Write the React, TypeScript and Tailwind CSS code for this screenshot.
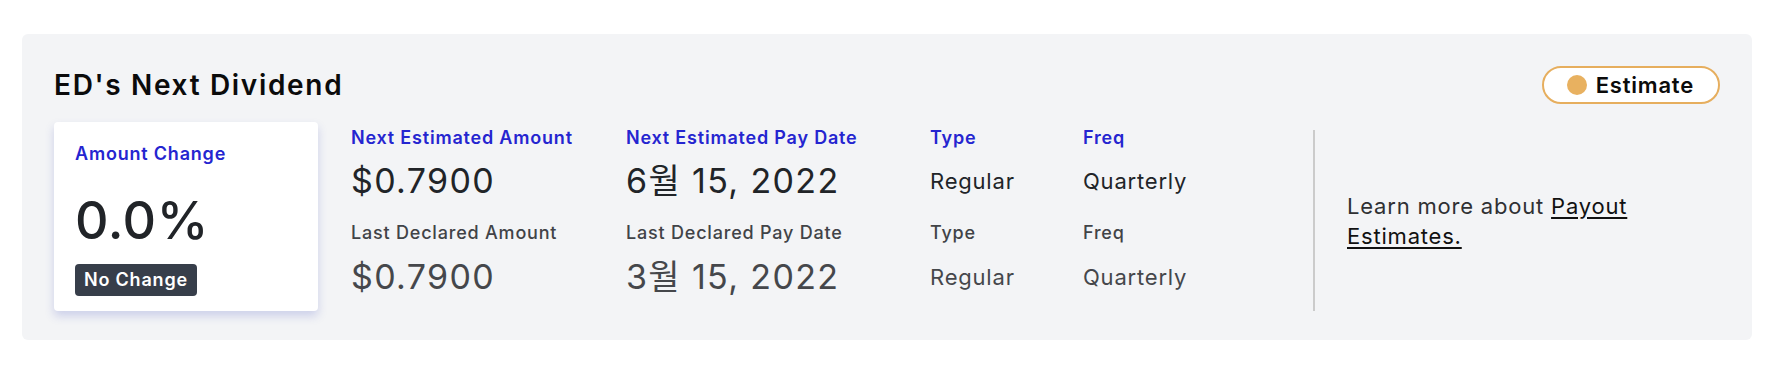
import React from "react";

const FONT = "font-['Inter','Noto_Sans_CJK_KR',sans-serif]";

const COLUMNS = [
  {
    id: "amount",
    width: "w-[275px]",
    next: { label: "Next Estimated Amount", value: "$0.7900" },
    last: { label: "Last Declared Amount", value: "$0.7900" },
    big: true,
  },
  {
    id: "date",
    width: "w-[304px]",
    next: { label: "Next Estimated Pay Date", value: "6월 15, 2022" },
    last: { label: "Last Declared Pay Date", value: "3월 15, 2022" },
    big: true,
  },
  {
    id: "type",
    width: "w-[153px]",
    next: { label: "Type", value: "Regular" },
    last: { label: "Type", value: "Regular" },
    big: false,
  },
  {
    id: "freq",
    width: "w-[230px]",
    next: { label: "Freq", value: "Quarterly" },
    last: { label: "Freq", value: "Quarterly" },
    big: false,
  },
];

function DataColumn({ col }: { col: (typeof COLUMNS)[number] }) {
  const valueSize = col.big ? "text-[34px] tracking-[0.04em]" : "text-[22px]";
  return (
    <div className={`${col.width} flex flex-col items-start pt-[2px]`}>
      <span className="text-[18px] font-semibold leading-[27px] text-[#2525d0]">{col.next.label}</span>
      <span className={`mt-[10px] whitespace-nowrap ${valueSize} leading-[40px] text-[#212428]`}>
        {col.next.value}
      </span>
      <span className="mt-[18px] text-[18px] font-medium leading-[27px] text-[#414347]">{col.last.label}</span>
      <span className={`mt-[11px] whitespace-nowrap ${valueSize} leading-[40px] text-[#45474b]`}>
        {col.last.value}
      </span>
    </div>
  );
}

export default function App() {
  return (
    <div className={`${FONT} min-h-[366px] bg-white pl-[22px] pr-[32px] pt-[34px] tracking-[0.05em]`}>
      <div className="rounded-md bg-[#f3f4f6] px-[32px] pb-[29px] pt-[32px]">
        {/* Title row */}
        <div className="flex items-center justify-between">
          <h2 className="text-[28px] font-semibold leading-[34px] tracking-[0.06em] text-[#0b0b0b]">ED's Next Dividend</h2>
          <span className="inline-flex h-[38px] items-center gap-[9px] rounded-full border-2 border-[#e6ae5e] bg-white pl-[23px] pr-[24px]">
            <span className="h-[20px] w-[20px] rounded-full bg-[#e8b160]" />
            <span className="text-[22px] font-semibold leading-none text-[#0b0b0b]">Estimate</span>
          </span>
        </div>

        <div className="mt-[18px] flex items-stretch">
          {/* Amount change card */}
          <div className="flex w-[264px] shrink-0 flex-col items-start rounded-[4px] bg-white pb-[15px] pl-[21px] pt-[18px] shadow-[0_5px_10px_rgba(70,80,190,0.22)]">
            <span className="text-[18px] font-semibold leading-[27px] text-[#2525d0]">Amount Change</span>
            <span className="mt-[28px] text-[52px] font-medium leading-[52px] tracking-[0.01em] text-[#212428]">0.0%</span>
            <span className="mt-[17px] rounded-[4px] bg-[#373e4a] px-[9px] py-[4px] text-[18px] font-semibold leading-[24px] text-white">
              No Change
            </span>
          </div>

          <div className="ml-[33px] flex">
            {COLUMNS.map((c) => (
              <DataColumn key={c.id} col={c} />
            ))}
          </div>

          {/* Learn more */}
          <div className="mt-[8px] flex items-center border-l-2 border-[#cbcbcb] pl-[32px]">
            <p className="max-w-[300px] text-[22px] leading-[30px] text-[#2f3033]">
              Learn more about{" "}
              <a href="#" className="text-[#111] underline underline-offset-[3px]">
                Payout Estimates.
              </a>
            </p>
          </div>
        </div>
      </div>
    </div>
  );
}
